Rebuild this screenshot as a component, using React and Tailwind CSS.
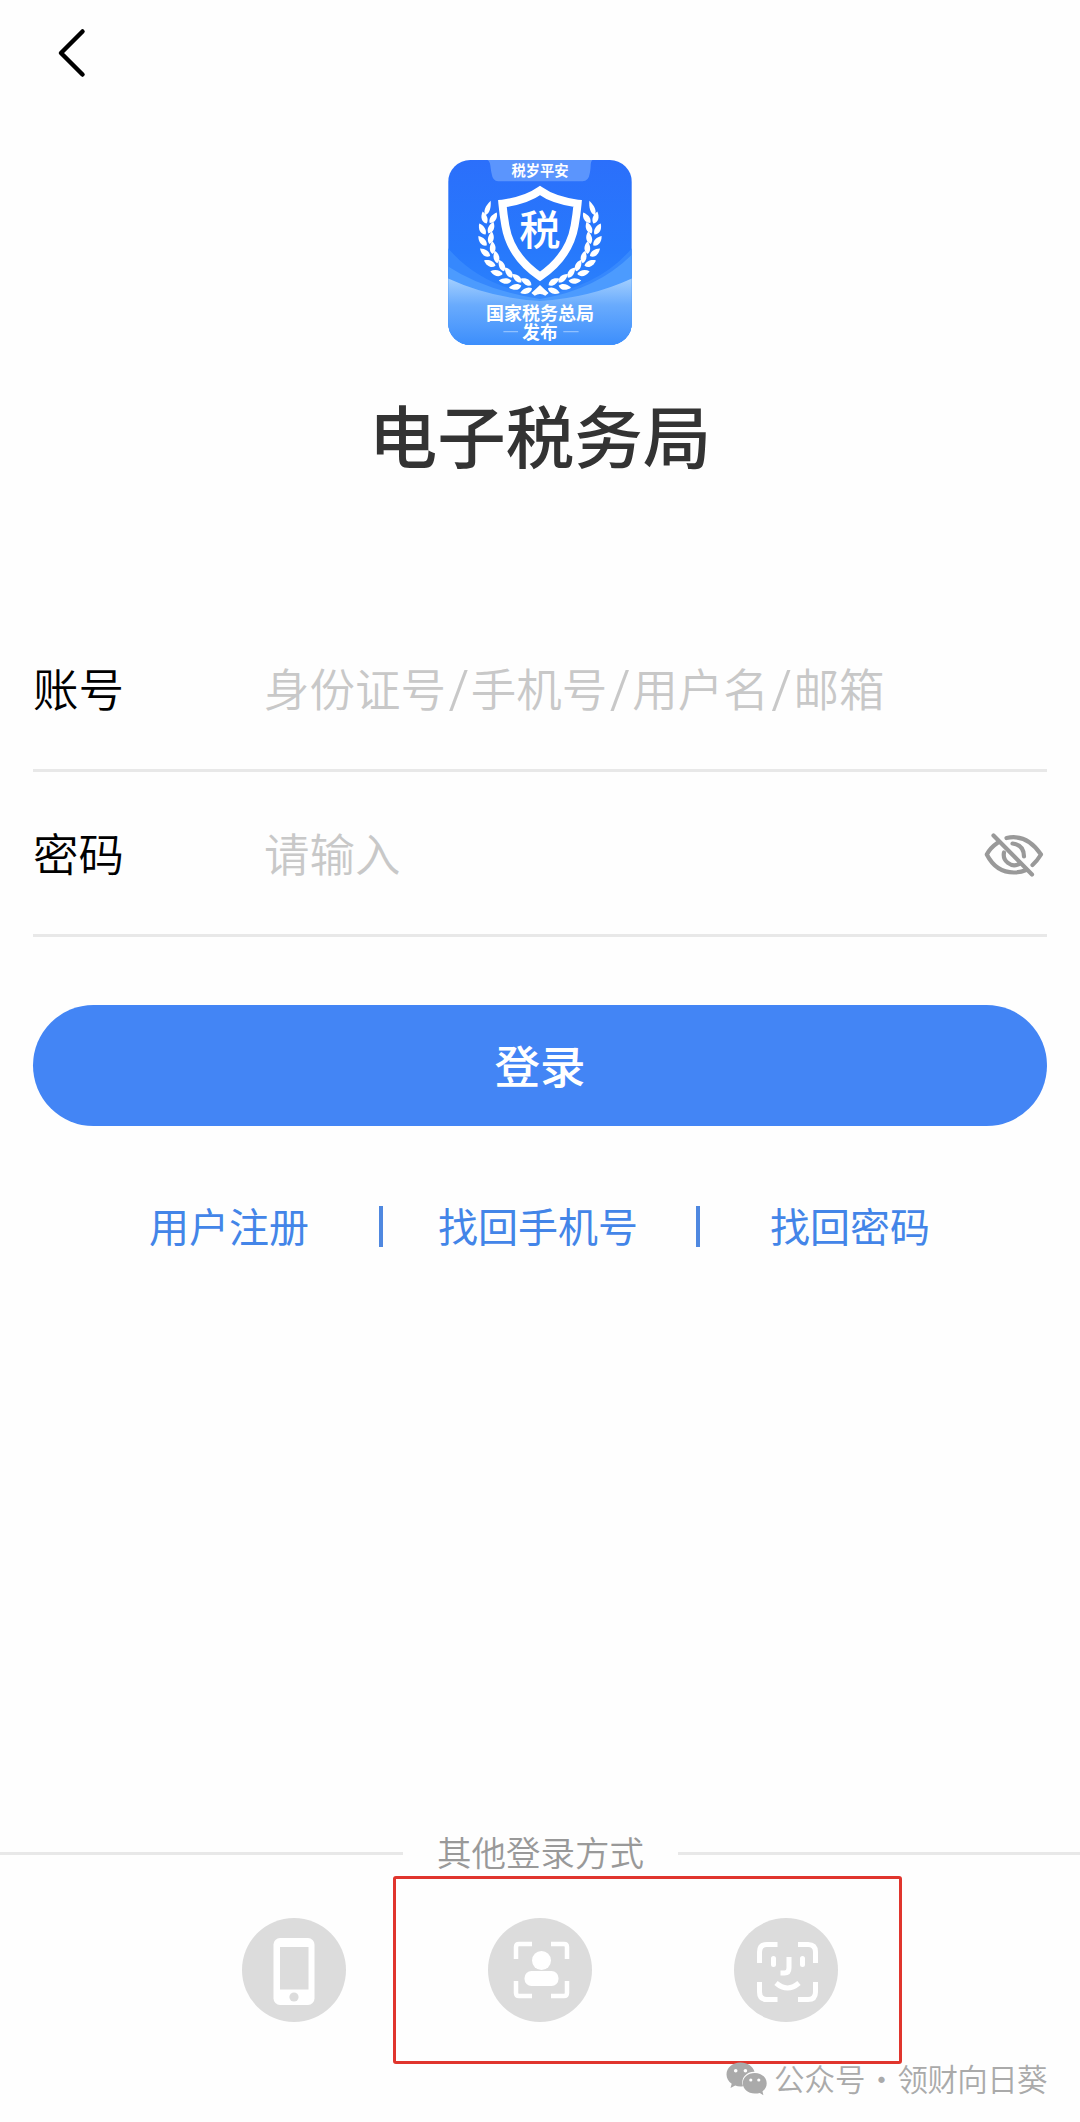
import React from 'react';

const LINKS = ['用户注册', '找回手机号', '找回密码'];

// One side of the laurel: pairs of leaves along an arc, plus the leaf at the tip
const LEAVES = Array.from({ length: 9 }, (_, i) => {
    const deg = 99 + i * 11.6;
    const rad = (deg * Math.PI) / 180;
    return {
        x: 330 + 161 * Math.cos(rad),
        y: 283 + 162 * Math.sin(rad),
        angle: deg + 90,
    };
});

const LaurelBranch = () => (
    <g fill="#fff">
        {LEAVES.map((leaf, i) => (
            <g key={i} transform={`translate(${leaf.x} ${leaf.y}) rotate(${leaf.angle})`}>
                <path d="M0 0C8 -13 24 -12 38 1C26 10 9 11 0 0Z" transform="rotate(-32) translate(0 -3)" />
                <path d="M0 0C8 -11 24 -10 38 -1C26 12 9 13 0 0Z" transform="rotate(24) translate(4 5)" />
            </g>
        ))}
        <path d="M0 0C8 -11 26 -10 46 0C26 9 9 10 0 0Z" transform="translate(166 226) rotate(-70)" />
    </g>
);

const AppLogo = () => (
    <svg className="h-[185px] w-[184px]" viewBox="54 60 552 556">
        <defs>
            <linearGradient id="sky" x1="0" y1="0" x2="0" y2="1">
                <stop offset="0" stopColor="#2b6ffb" />
                <stop offset="0.5" stopColor="#2779fc" />
                <stop offset="1" stopColor="#2f8afc" />
            </linearGradient>
            <linearGradient id="wave" x1="0" y1="0" x2="0" y2="1">
                <stop offset="0" stopColor="#a3cffe" />
                <stop offset="0.4" stopColor="#69abfd" />
                <stop offset="1" stopColor="#3c8efc" />
            </linearGradient>
            <clipPath id="tile">
                <rect x="54" y="60" width="552" height="556" rx="66" />
            </clipPath>
        </defs>
        <g clipPath="url(#tile)">
            <rect x="54" y="60" width="552" height="556" fill="url(#sky)" />
            <path d="M54 325Q150 440 330 468Q510 440 606 325V616H54Z" fill="#3688fd" />
            <path d="M54 380Q160 450 330 478Q500 450 606 345V616H54Z" fill="#4c9bfe" />
            <path d="M54 416Q180 474 330 484Q480 474 606 416V616H54Z" fill="url(#wave)" />
            <path d="M172 60H488C480 66 484 78 480 98Q476 124 458 124H204Q188 124 184 98C180 78 182 66 172 60Z" fill="#5b95fd" />
        </g>
        <text x="330" y="107" textAnchor="middle" fontSize="43" fontWeight="700" fill="#fff">税岁平安</text>
        <path
            d="M330 152Q288 182 217 191Q220 225 226 258Q242 350 330 410Q418 350 434 258Q440 225 443 191Q372 182 330 152Z"
            fill="none"
            stroke="#fff"
            strokeWidth="24"
        />
        <text x="330" y="314" textAnchor="middle" fontSize="124" fontWeight="500" fill="#fff">税</text>
        <LaurelBranch />
        <g transform="translate(660 0) scale(-1 1)">
            <LaurelBranch />
        </g>
        <path d="M330 436Q342 448 356 460L346 468Q330 458 314 468L304 460Q318 448 330 436Z" fill="#fff" />
        <text x="330" y="540" textAnchor="middle" fontSize="54" fontWeight="700" fill="#fff">国家税务总局</text>
        <text x="330" y="597" textAnchor="middle" fontSize="53" fontWeight="700" fill="#fff">发布</text>
        <path d="M220 576H264M400 576H446" stroke="#8fc0ff" strokeWidth="4" />
    </svg>
);

const EyeOffIcon = () => (
    <svg className="h-[44px] w-[60px]" viewBox="0 0 60 44" fill="none" stroke="#999" strokeWidth="4.2" strokeLinecap="round" strokeLinejoin="round">
        <path d="M14 9.500Q6 15 2.800 21.500Q12 39.500 30 39.500Q37 39.500 42 37" />
        <path d="M22.500 5Q43 0.500 57 21.500Q53 28 48.500 32" />
        <path d="M20 19.500A10.500 10.500 0 0 0 35 31" />
        <path d="M28.500 10.500Q40 12 40 23.500" />
        <path d="M9.500 2.500L48 41.500" />
    </svg>
);

const PhoneIcon = () => (
    <svg className="size-[104px]" viewBox="0 0 104 104">
        <circle cx="52" cy="52" r="52" fill="#dcdcdc" />
        <rect x="31.500" y="20" width="41" height="67" rx="6.500" fill="#fff" />
        <rect x="38" y="29" width="28.500" height="42.500" fill="#dcdcdc" />
        <circle cx="52" cy="79" r="4.600" fill="#dcdcdc" />
    </svg>
);

const IdScanIcon = () => (
    <svg className="size-[104px]" viewBox="0 0 104 104">
        <circle cx="52" cy="52" r="52" fill="#dcdcdc" />
        <path
            d="M28 41V29Q28 26 31 26H44M63 26H76Q79 26 79 29V41M79 63V75Q79 78 76 78H63M44 78H31Q28 78 28 75V63"
            fill="none"
            stroke="#fff"
            strokeWidth="4.500"
        />
        <circle cx="53.500" cy="42.500" r="9.500" fill="#fff" />
        <rect x="36.500" y="53" width="34" height="15" rx="7" fill="#fff" />
    </svg>
);

const FaceScanIcon = () => (
    <svg className="size-[104px]" viewBox="0 0 104 104">
        <circle cx="52" cy="52" r="52" fill="#dcdcdc" />
        <g fill="none" stroke="#fff" strokeWidth="5">
            <path d="M25.500 45V34Q25.500 26.500 33 26.500H43.500M64 26.500H74Q81.500 26.500 81.500 34V45M81.500 64V74Q81.500 81.500 74 81.500H64M43.500 81.500H33Q25.500 81.500 25.500 74V64" />
            <path d="M39.500 40.500V46.500M68.500 40.500V46.500" strokeLinecap="round" />
            <path d="M55 39V50Q55 55 50.500 55H46.500" />
            <path d="M42 65Q53.500 75 65 65" />
        </g>
    </svg>
);

const WechatIcon = () => (
    <svg className="h-[34px] w-[41px]" viewBox="0 0 41 34">
        <path d="M14.500 0.500C6.500 0.500 0.500 5.800 0.500 12.500C0.500 16.500 2.600 19.600 5.700 21.800L4.500 26L9.200 23.500Q13 24.900 17 24.200C14 16 21 9.500 28.500 9.800C27 4.300 21.500 0.500 14.500 0.500Z" fill="#aaa" />
        <path d="M28.800 11C21.800 11 16.800 15.500 16.800 21.300C16.800 27.200 22 31.600 28.800 31.600Q31.500 31.600 33.800 30.900L37.400 33.200L36.500 29.300C39.200 27.400 40.700 24.600 40.700 21.300C40.700 15.500 35.600 11 28.800 11Z" fill="#aaa" />
        <g fill="#fff">
            <circle cx="9.700" cy="8.700" r="1.800" />
            <circle cx="19.400" cy="8.700" r="1.800" />
            <circle cx="24.800" cy="18" r="1.600" />
            <circle cx="32.800" cy="18" r="1.600" />
        </g>
    </svg>
);

const FormRow = ({ label, children, action }) => (
    <div className="flex h-[165px] items-center border-b-[3px] border-[#e8e8e8]">
        <span className="w-[231px] pb-px text-[45.500px] font-[350] text-black">{label}</span>
        <span className="flex-1 whitespace-nowrap pb-px text-[45.500px] font-[350] text-[#c8c8c8]">{children}</span>
        {action}
    </div>
);

// Taller slash that spans the full height of the characters around it
const Slash = () => (
    <span className="inline-block w-[24.800px] translate-y-[4px] text-center font-['Noto_Sans'] text-[57px] font-light leading-[0]">/</span>
);

const App = () => {
    return (
        <div className="flex h-[2122px] w-[1080px] flex-col overflow-hidden bg-[#fefefe] font-['Noto_Sans_CJK_SC',sans-serif] leading-none">
            <header className="h-[160px] pl-[56px] pt-[27px]">
                <svg className="h-[52px] w-[32px]" viewBox="0 0 32 52" fill="none" stroke="#000" strokeWidth="4.500" strokeLinecap="round" strokeLinejoin="round">
                    <path d="M26.500 4.500L5 26L26.500 47.500" />
                </svg>
            </header>

            <div className="flex h-[447px] flex-col items-center">
                <AppLogo />
                <h1 className="mt-[55px] text-[68.500px] font-medium text-[#333]">电子税务局</h1>
            </div>

            <main className="px-[33px]">
                <FormRow label="账号">
                    身份证号<Slash />手机号<Slash />用户名<Slash />邮箱
                </FormRow>
                <FormRow label="密码" action={<div className="mr-[3px] mt-[3px]"><EyeOffIcon /></div>}>
                    请输入
                </FormRow>
                <button className="mt-[68px] block h-[121px] w-full rounded-full bg-[#4385f5] pb-px text-[45.500px] font-medium text-white">
                    登录
                </button>
                <nav className="mt-[80px] flex h-[41px] items-center pl-[116px] text-[40px] text-[#4385e8]">
                    <a className="pb-[3px]">{LINKS[0]}</a>
                    <i className="ml-[69.500px] mr-[55.500px] h-full w-1 bg-[#4f88e0]" />
                    <a className="pb-[3px]">{LINKS[1]}</a>
                    <i className="ml-[58px] mr-[70px] h-full w-1 bg-[#4f88e0]" />
                    <a className="pb-[3px]">{LINKS[2]}</a>
                </nav>
            </main>

            <footer className="mt-auto flex h-[288px] flex-col">
                <div className="flex h-[38px] items-center justify-between">
                    <div className="h-[3px] w-[403px] bg-[#e8e8e8]" />
                    <span className="pb-[3px] text-[34.500px] font-[350] text-[#999]">其他登录方式</span>
                    <div className="h-[3px] w-[402px] bg-[#e8e8e8]" />
                </div>
                <div className="mt-[4px] flex">
                    <div className="flex w-[393px] justify-end pr-[47px] pt-[42px]">
                        <PhoneIcon />
                    </div>
                    <div className="flex h-[188px] w-[509px] gap-[142px] rounded-[3px] border-[3px] border-[#e0352d] pl-[92px] pt-[39px]">
                        <IdScanIcon />
                        <FaceScanIcon />
                    </div>
                </div>
                <div className="-mt-[2px] flex items-start justify-end pr-[33px] text-[30.500px] font-[350] text-[#aaa]">
                    <WechatIcon />
                    <span className="ml-[7px] mt-px">公众号</span>
                    <span className="mt-px w-[32px] text-center">·</span>
                    <span className="mt-px tracking-[-0.600px]">领财向日葵</span>
                </div>
            </footer>
        </div>
    );
};

export default App;
